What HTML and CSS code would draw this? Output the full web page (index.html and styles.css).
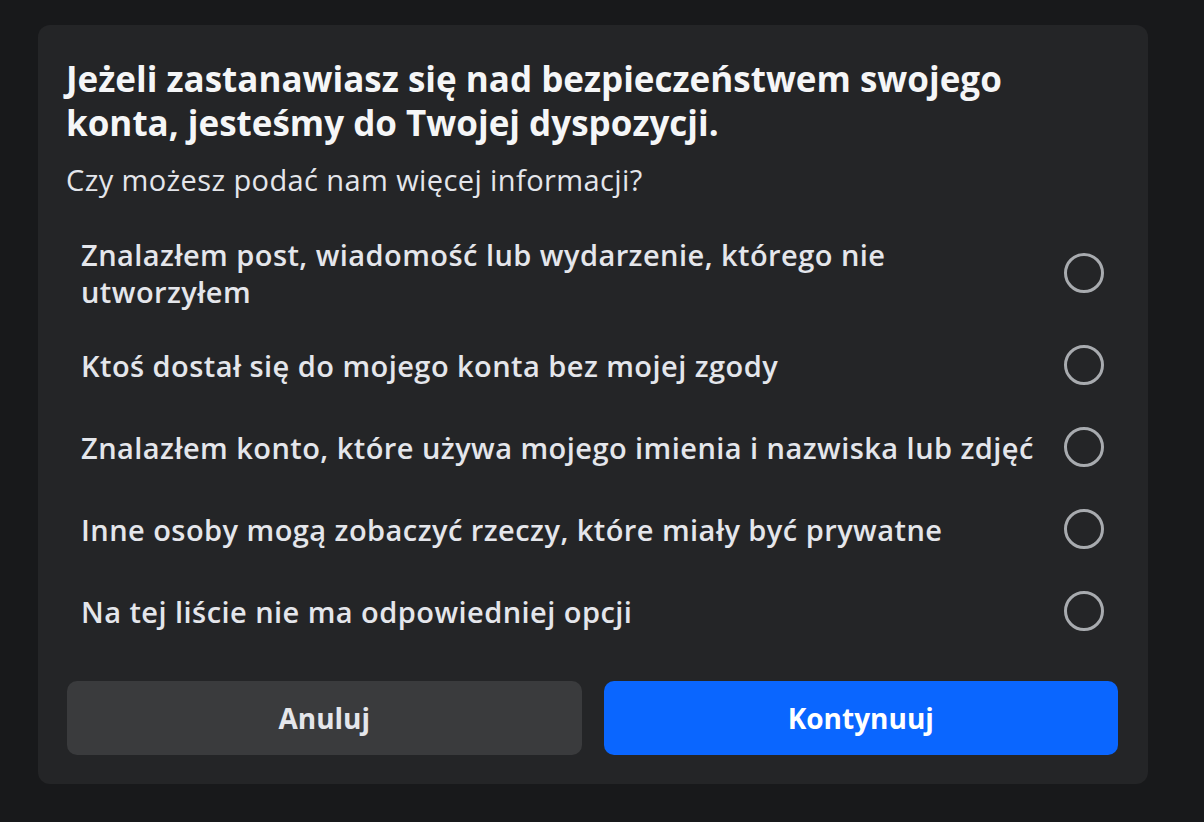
FILE: index.html
```html
<!DOCTYPE html>
<html lang="pl">
<head>
<meta charset="utf-8">
<title>Bezpieczeństwo konta</title>
<link rel="stylesheet" href="styles.css">
</head>
<body>
<div class="dialog">
  <h1 class="title">Jeżeli zastanawiasz się nad bezpieczeństwem swojego konta, jesteśmy do Twojej dyspozycji.</h1>
  <p class="subtitle">Czy możesz podać nam więcej informacji?</p>
  <ul class="options">
    <li class="option"><span class="label">Znalazłem post, wiadomość lub wydarzenie, którego nie utworzyłem</span><span class="radio"></span></li>
    <li class="option"><span class="label">Ktoś dostał się do mojego konta bez mojej zgody</span><span class="radio"></span></li>
    <li class="option"><span class="label">Znalazłem konto, które używa mojego imienia i nazwiska lub zdjęć</span><span class="radio"></span></li>
    <li class="option"><span class="label">Inne osoby mogą zobaczyć rzeczy, które miały być prywatne</span><span class="radio"></span></li>
    <li class="option"><span class="label">Na tej liście nie ma odpowiedniej opcji</span><span class="radio"></span></li>
  </ul>
  <div class="actions">
    <button class="btn btn-secondary" type="button">Anuluj</button>
    <button class="btn btn-primary" type="button">Kontynuuj</button>
  </div>
</div>
</body>
</html>
```
FILE: styles.css
```css
html, body {
  margin: 0;
  padding: 0;
  background: #18191b;
  font-family: "Open Sans", "Noto Sans", "Liberation Sans", sans-serif;
  color: #e4e6eb;
}

body {
  padding: 25px 0 0 38px;
  height: 822px;
  box-sizing: border-box;
}

.dialog {
  width: 1110px;
  box-sizing: border-box;
  background: #242527;
  border-radius: 12px;
  padding: 32px 30px 29px 28px;
}

.title {
  margin: 0;
  font-size: 35px;
  line-height: 44px;
  font-weight: 700;
  color: #f5f6f7;
  max-width: 960px;
}

.subtitle {
  margin: 17px 0 0;
  font-size: 29px;
  line-height: 36px;
  letter-spacing: 0.4px;
  font-weight: 400;
  color: #e4e6eb;
}

.options {
  list-style: none;
  margin: 24px 0 0;
  padding: 0 14px 0 15px;
}

.option {
  display: flex;
  align-items: center;
  justify-content: space-between;
  min-height: 82px;
  box-sizing: border-box;
  padding: 14px 0;
  gap: 10px;
}

.label {
  flex: 1;
  font-size: 29px;
  line-height: 37px;
  letter-spacing: 0.45px;
  font-weight: 600;
  color: #e4e6eb;
}

.radio {
  flex: none;
  width: 40px;
  height: 40px;
  box-sizing: border-box;
  border: 3px solid #a8abaf;
  border-radius: 50%;
}

.actions {
  display: flex;
  gap: 22px;
  margin-top: 29px;
  padding-left: 1px;
}

.btn {
  flex: 1;
  height: 74px;
  border: none;
  border-radius: 10px;
  font-family: inherit;
  font-size: 28px;
  font-weight: 700;
  cursor: pointer;
}

.btn-secondary {
  background: #3a3b3d;
  color: #e4e6eb;
}

.btn-primary {
  background: #0a66ff;
  color: #ffffff;
}
```
